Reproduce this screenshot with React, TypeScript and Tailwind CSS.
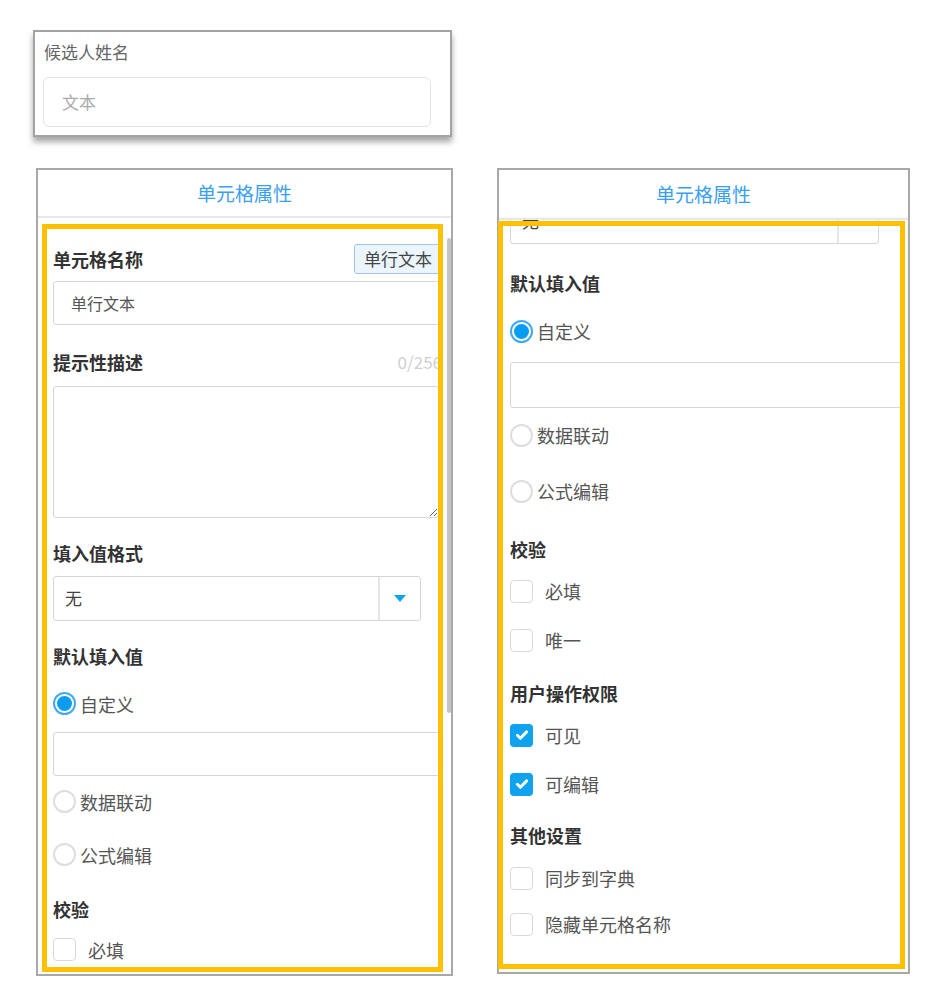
const FONT = "font-['Noto_Sans_CJK_SC','Noto_Sans',sans-serif]";

function FieldLabel({ text, className = "" }: { text: string; className?: string }) {
  return (
    <div className={`h-[24px] text-[18px] font-bold leading-[24px] text-[#333] ${className}`}>
      {text}
    </div>
  );
}

function Radio({ label, checked, className = "" }: { label: string; checked?: boolean; className?: string }) {
  return (
    <div className={`flex h-[24px] items-center ${className}`}>
      {checked ? (
        <span className="flex h-[23px] w-[23px] items-center justify-center rounded-full border-2 border-[#3fa9f2] bg-white">
          <span className="h-[15px] w-[15px] rounded-full bg-[#0a9cf0]" />
        </span>
      ) : (
        <span className="h-[23px] w-[23px] rounded-full border-2 border-[#dedede] bg-white" />
      )}
      <span className="ml-[4px] text-[18px] leading-[24px] text-[#555]">{label}</span>
    </div>
  );
}

function Checkbox({ label, checked, className = "" }: { label: string; checked?: boolean; className?: string }) {
  return (
    <div className={`flex h-[24px] items-center ${className}`}>
      {checked ? (
        <span className="flex h-[23px] w-[23px] items-center justify-center rounded-[4px] bg-[#0ea2ef]">
          <svg width="16" height="16" viewBox="0 0 16 16" aria-hidden>
            <path d="M3.4 8.3l3 3 6.2-6.4" fill="none" stroke="#fff" strokeWidth="3" strokeLinecap="round" strokeLinejoin="round" />
          </svg>
        </span>
      ) : (
        <span className="h-[23px] w-[23px] rounded-[4px] border-[1.5px] border-[#d9d9d9] bg-white" />
      )}
      <span className="ml-[12px] text-[18px] leading-[24px] text-[#555]">{label}</span>
    </div>
  );
}

function SelectBox({
  width,
  height,
  divider,
  arrow = true,
  className = ""
}: {
  width: string;
  height: string;
  divider: string;
  arrow?: boolean;
  className?: string;
}) {
  return (
    <div className={`flex rounded-[3px] border border-[#d6d6d6] bg-white ${width} ${height} ${className}`}>
      <div className={`flex items-center pl-[11px] text-[17px] text-[#444] ${divider}`}>无</div>
      <div className="flex flex-1 items-center justify-center border-l-2 border-[#e6e6e6]">
        {arrow && (
          <svg width="12" height="7" viewBox="0 0 12 7" aria-hidden>
            <polygon points="0,0 12,0 6,7" fill="#0ea2ef" />
          </svg>
        )}
      </div>
    </div>
  );
}

function PanelHeader({ height }: { height: string }) {
  return (
    <div className={`flex items-center justify-center border-b-2 border-[#e8e8e8] text-[19px] text-[#3a9ef3] ${height}`}>
      单元格属性
    </div>
  );
}

export default function App() {
  return (
    <div className={`min-h-[987px] bg-white pl-[33px] pt-[30px] ${FONT}`}>
      {/* preview card */}
      <div className="h-[107px] w-[419px] border-2 border-[#a3a3a3] bg-white pl-[8px] pt-[8px] shadow-[0_5px_6px_rgba(0,0,0,0.35)]">
        <div className="h-[24px] pl-[1px] text-[17px] leading-[24px] text-[#666]">候选人姓名</div>
        <div className="mt-[13px] flex h-[50px] w-[388px] items-center rounded-[6px] border border-[#e3e3e3] pl-[18px] text-[17px] text-[#aaa]">
          文本
        </div>
      </div>

      <div className="mt-[31px] flex gap-[44px] pl-[3px]">
        {/* left panel */}
        <div className="relative flex h-[808px] w-[417px] flex-col border-2 border-[#a8a8a8] bg-white">
          <PanelHeader height="h-[48px]" />
          <div className="flex min-h-0 flex-1">
            <div className="min-w-0 flex-1 overflow-hidden pl-[15px] pt-[26px]">
              <div className="flex h-[30px] w-[389px] items-center justify-between">
                <span className="text-[18px] font-bold text-[#333]">单元格名称</span>
                <span className="flex h-[30px] items-center rounded-[3px] border border-[#9fc6ea] bg-[#eaf5fe] px-[9px] text-[17px] text-[#444]">
                  单行文本
                </span>
              </div>
              <div className="mt-[7px] flex h-[44px] w-[389px] items-center rounded-[3px] border border-[#d6d6d6] pl-[17px] text-[16px] text-[#555]">
                单行文本
              </div>
              <div className="mt-[24px] flex w-[389px] items-center justify-between">
                <FieldLabel text="提示性描述" />
                <span className="text-[17px] text-[#cfcfcf]">0/256</span>
              </div>
              <textarea
                className="mt-[11px] block h-[132px] w-[386px] rounded-[3px] border border-[#d6d6d6] outline-none"
                defaultValue=""
              />
              <FieldLabel text="填入值格式" className="mt-[23px]" />
              <SelectBox width="w-[368px]" height="h-[45px]" divider="w-[324px]" className="mt-[11px]" />
              <FieldLabel text="默认填入值" className="mt-[23px]" />
              <Radio label="自定义" checked className="mt-[24px]" />
              <div className="mt-[16px] h-[44px] w-[389px] rounded-[3px] border border-[#d6d6d6]" />
              <Radio label="数据联动" className="mt-[14px]" />
              <Radio label="公式编辑" className="mt-[29px]" />
              <FieldLabel text="校验" className="mt-[30px]" />
              <Checkbox label="必填" className="mt-[17px]" />
            </div>
            <div className="w-[4px] shrink-0">
              <div className="mt-[20px] h-[475px] rounded-full bg-[#c4c4c4]" />
            </div>
          </div>
          <div className="pointer-events-none absolute bottom-[2px] left-[4px] top-[54px] w-[401px] border-[5px] border-[#ffc000]" />
        </div>

        {/* right panel */}
        <div className="relative flex h-[806px] w-[413px] flex-col border-2 border-[#a8a8a8] bg-white">
          <PanelHeader height="h-[50px]" />
          <div className="min-h-0 flex-1 overflow-hidden pl-[11px]">
            <SelectBox width="w-[369px]" height="h-[46px]" divider="w-[326px]" arrow={false} className="-mt-[22px]" />
            <FieldLabel text="默认填入值" className="mt-[27px]" />
            <Radio label="自定义" checked className="mt-[24px]" />
            <div className="mt-[19px] h-[46px] w-[394px] rounded-[3px] border border-[#d6d6d6]" />
            <Radio label="数据联动" className="mt-[15px]" />
            <Radio label="公式编辑" className="mt-[32px]" />
            <FieldLabel text="校验" className="mt-[34px]" />
            <Checkbox label="必填" className="mt-[18px]" />
            <Checkbox label="唯一" className="mt-[25px]" />
            <FieldLabel text="用户操作权限" className="mt-[29px]" />
            <Checkbox label="可见" checked className="mt-[18px]" />
            <Checkbox label="可编辑" checked className="mt-[25px]" />
            <FieldLabel text="其他设置" className="mt-[27px]" />
            <Checkbox label="同步到字典" className="mt-[19px]" />
            <Checkbox label="隐藏单元格名称" className="mt-[22px]" />
          </div>
          <div className="pointer-events-none absolute bottom-[3px] left-[-1px] top-[51px] w-[407px] border-[5px] border-[#ffc000]" />
        </div>
      </div>
    </div>
  );
}
